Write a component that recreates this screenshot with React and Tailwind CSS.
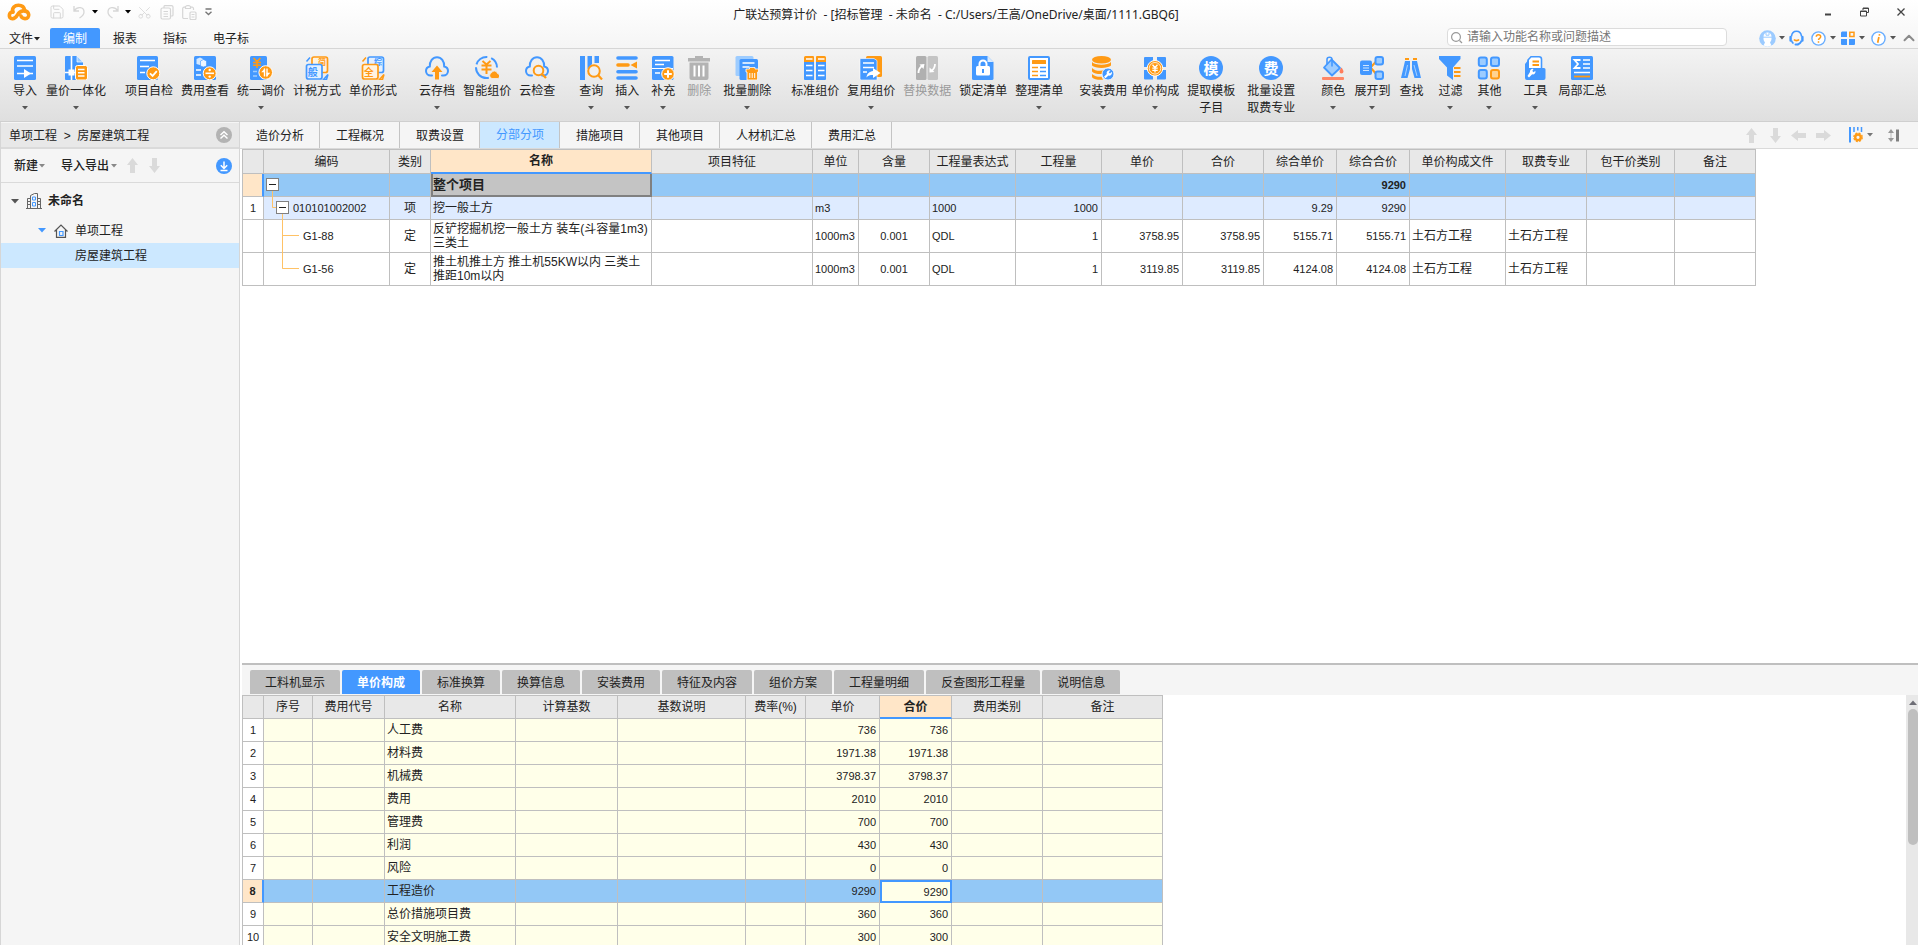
import React from 'react';
import { Save, Scissors, ChevronUp } from 'lucide-react';
import clsx from 'clsx';

const B = '#4398ff';
const O = '#ff9a14';
const L = '#9dccff';
const G = '#b3b3b3';

const Caret = ({ className = 'text-[#555]' }) => (
  <svg width="6" height="4" viewBox="0 0 6 4" className={clsx('shrink-0', className)}>
    <path d="M0 0h6L3 3.5z" fill="currentColor" />
  </svg>
);

const Icon = ({ children }) => (
  <svg width="24" height="24" viewBox="0 0 24 24" fill="none" className="shrink-0">
    {children}
  </svg>
);

const Glyph = ({ x, y, size, fill, children }) => (
  <text x={x} y={y} fontSize={size} fill={fill} fontWeight="700" textAnchor="middle" fontFamily='"Noto Sans CJK SC", sans-serif'>
    {children}
  </text>
);

const Cloud = () => (
  <path d="M7 19.5H5.6A4.6 4.6 0 0 1 1 15c0-2.300 1.600-4.200 3.800-4.600C4.600 5.500 7.600 1.200 12 1.200s7.400 4.300 7.200 9.200C21.400 10.800 23 12.700 23 15a4.600 4.600 0 0 1-4.600 4.500H17" stroke={B} strokeWidth="2" strokeLinecap="round" />
);

// --- Ribbon icons ---
const icons = {
  import: (
    <Icon>
      <rect x="1" width="22" height="24" rx="1.500" fill={B} />
      <path d="M4 4.500h16M4 10h16M4 17.500h16" stroke="#fff" strokeWidth="1.600" />
      <path d="M11 13l7 4.500-7 4.500z" fill="#fff" />
    </Icon>
  ),
  combine: (
    <Icon>
      <path d="M2 0h11l6 6v18H2a1 1 0 0 1-1-1V1a1 1 0 0 1 1-1z" fill={B} />
      <path d="M13 0l6 6h-6z" fill={L} stroke="#fff" strokeWidth=".7" />
      <path d="M7.500 0v24M1 16.500h12" stroke="#fff" strokeWidth="1.600" />
      <rect x="4.500" y="13.500" width="6" height="6" fill="#fff" />
      <rect x="11.500" y="9.500" width="12" height="14.500" rx="2" fill={O} stroke="#fff" />
      <path d="M14 13.500h6.500M14 16.800h6.500M14 20h6.500" stroke="#fff" strokeWidth="1.400" />
    </Icon>
  ),
  selfCheck: (
    <Icon>
      <rect width="21" height="24" rx="1.500" fill={B} />
      <path d="M3 4.500h15M3 10.500h9M3 16.500h5" stroke="#fff" strokeWidth="1.600" />
      <circle cx="16.300" cy="17.300" r="6.500" fill={O} stroke="#fff" />
      <path d="M13 17.300l2.600 2.600 4.200-4.800" stroke="#fff" strokeWidth="1.800" />
    </Icon>
  ),
  costView: (
    <Icon>
      <rect x="1" width="22" height="24" rx="1.500" fill={B} />
      <path d="M3.500 3l3.500-1.500 3 1.500v5l-3 1-3.500-1z" fill="#d5e9ff" />
      <path d="M7.500 5l3-1.500 3 1.500v5l-3 1-3-1z" fill="#eef6ff" stroke={B} strokeWidth=".6" />
      <path d="M3 14h5M3 19h5" stroke="#fff" strokeWidth="1.600" />
      <circle cx="16.700" cy="17.300" r="6.500" fill={O} stroke="#fff" />
      <path d="M12.500 17.300h8.500" stroke="#fff" strokeWidth="1.600" />
      <circle cx="16.700" cy="14" r="1.200" fill="#fff" />
      <circle cx="16.700" cy="20.600" r="1.200" fill="#fff" />
    </Icon>
  ),
  adjust: (
    <Icon>
      <rect x="1" width="17" height="24" rx="1.500" fill={B} />
      <path d="M4.500 2L8 5.500 11.500 2M8 6v6M4 6.500h8M4 9.200h8" stroke={O} strokeWidth="1.600" />
      <path d="M4 15.500h4M4 20h4" stroke={L} strokeWidth="1.500" />
      <circle cx="16.700" cy="16.500" r="6.800" fill={O} stroke="#fff" />
      <path d="M15.500 20.500v-8M18 12.500v8" stroke="#fff" strokeWidth="1.400" />
      <path d="M16 12.300v4h-3.800zM17.500 20.700v-4h3.800z" fill="#fff" />
    </Icon>
  ),
  taxMode: (
    <Icon>
      <rect x="7" y="1" width="15.500" height="15.500" rx="2" fill="#fff3e0" stroke={O} strokeWidth="1.700" />
      <Glyph x="17" y="8.500" size="8" fill={O}>简</Glyph>
      <rect x="1.500" y="8.500" width="15.500" height="14.500" rx="2" fill="#e3f0ff" stroke={B} strokeWidth="1.700" />
      <Glyph x="7.800" y="19.500" size="10" fill={B}>般</Glyph>
      <path d="M1.500 5.500l3.500-4M18.500 23.500h3l1.500-5z" stroke={B} strokeWidth="1.500" />
    </Icon>
  ),
  priceMode: (
    <Icon>
      <rect x="7" y="1" width="15.500" height="15.500" rx="2" fill="#e3f0ff" stroke={B} strokeWidth="1.700" />
      <Glyph x="17" y="8.500" size="8" fill={B}>综</Glyph>
      <rect x="1.500" y="8.500" width="15.500" height="14.500" rx="2" fill="#fff3e0" stroke={O} strokeWidth="1.700" />
      <Glyph x="7.800" y="19.500" size="10" fill={O}>全</Glyph>
      <path d="M1.500 5.500l3.500-4M18.500 23.500h3l1.500-5z" stroke={O} strokeWidth="1.500" />
    </Icon>
  ),
  cloudSave: (
    <Icon>
      <Cloud />
      <path d="M12 9.500l5.500 6.500h-3.500v7.500h-4V16H6.500z" fill={O} />
    </Icon>
  ),
  smartPrice: (
    <Icon>
      <circle cx="11.500" cy="11.500" r="10.500" stroke={B} strokeWidth="2" strokeDasharray="19 3 14 4 40" strokeDashoffset="-14" />
      <path d="M7.500 5l4 3.500 4-3.500M11.500 8v10M6.500 9.500h10M6.500 13.500h10" stroke={O} strokeWidth="2" />
      <path d="M17 22.500a3 3 0 0 1-.500-5.700 3.200 3.200 0 0 1 6 .7 2.600 2.600 0 0 1 .5 5z" fill={O} stroke="#eee" strokeWidth=".8" />
    </Icon>
  ),
  cloudCheck: (
    <Icon>
      <Cloud />
      <circle cx="13.500" cy="14.500" r="4.800" stroke={O} strokeWidth="2" fill="#f0f0f0" />
      <path d="M17 18l4 4" stroke={O} strokeWidth="2.300" />
    </Icon>
  ),
  query: (
    <Icon>
      <path d="M1 0h5v24H1zM8.500 0H13v8l-4.500 5zM15.500 0H20v7h-4.500z" fill={B} />
      <circle cx="15" cy="15" r="5.800" stroke={O} strokeWidth="2" fill="#f0f0f0" />
      <path d="M19 19l4 4.500" stroke={O} strokeWidth="2.200" />
    </Icon>
  ),
  insert: (
    <Icon>
      <path d="M3 2h18M3 15.700h18M3 22h18" stroke={B} strokeWidth="3.600" strokeLinecap="round" />
      <path d="M3 9h10" stroke={O} strokeWidth="3.600" strokeLinecap="round" />
      <path d="M22 5.500v7L15.500 9z" fill={O} />
    </Icon>
  ),
  supplement: (
    <Icon>
      <rect x="1" width="21.500" height="24" rx="1.500" fill={B} />
      <path d="M1 12.500h21" stroke="#fff" />
      <path d="M4 4.500h15M4 8.500h9M4 17h5" stroke="#fff" strokeWidth="1.500" />
      <circle cx="17" cy="18" r="6.300" fill={O} stroke="#fff" />
      <path d="M17 14.200v7.600M13.200 18h7.600" stroke="#fff" strokeWidth="2" />
    </Icon>
  ),
  trash: (
    <Icon>
      <path d="M8 0h8v2h7v3.500H1V2h7zM2.500 6.500h19V22a2 2 0 0 1-2 2h-15a2 2 0 0 1-2-2z" fill={G} />
      <path d="M7.500 9.500v11M12 9.500v11M16.500 9.500v11" stroke="#fff" strokeWidth="2" />
    </Icon>
  ),
  batchTrash: (
    <Icon>
      <rect x=".5" width="18" height="20" rx="1.500" fill={L} />
      <rect x="4.500" y="3" width="18.500" height="21" rx="1.500" fill={B} />
      <path d="M7.500 7h12M7.500 11h7" stroke="#fff" strokeWidth="1.400" />
      <path d="M14.500 11.500h5.500v1.500h3.500v3h-1V24h-10.500v-8h-1v-3h3.500z" fill={O} stroke="#fff" strokeWidth=".8" />
      <path d="M14.800 17v5M17.200 17v5M19.700 17v5" stroke="#fff" />
    </Icon>
  ),
  standard: (
    <Icon>
      <path d="M2.500 0H10a1 1 0 0 1 1 1v6H1V1.500A1.500 1.500 0 0 1 2.500 0zM14 0h7.500A1.500 1.500 0 0 1 23 1.500V7H13V1a1 1 0 0 1 1-1z" fill={O} />
      <path d="M1 6h10v18H2a1 1 0 0 1-1-1zM13 6h10v17a1 1 0 0 1-1 1h-9z" fill={B} />
      <path d="M3 3h6.500M15 3h6.500M3 9.500h6.500M15 9.500h6.500M3 14.500h6.500M15 14.500h6.500M3 19.500h6.500M15 19.500h6.500" stroke="#fff" strokeWidth="1.500" />
    </Icon>
  ),
  reuse: (
    <Icon>
      <rect x="7" width="16" height="21" rx="1.500" fill={O} />
      <path d="M2 2.500h13l3 2V24H2.500A1.500 1.500 0 0 1 1 22.500v-19a1 1 0 0 1 1-1z" fill={B} stroke="#fff" strokeWidth=".6" />
      <path d="M4 7h11M4 11.500h11M4 16h4" stroke="#fff" strokeWidth="1.500" />
      <path d="M14 12l7.500 5-7.500 5v-3c-3 0-5 .5-6.500 2.500C8 17.500 10.500 15.500 14 15z" fill="#fff" />
    </Icon>
  ),
  replace: (
    <Icon>
      <rect x="1" width="10.500" height="24" rx="1.500" fill="#b0b0b0" />
      <rect x="12.500" width="10.500" height="24" rx="1.500" fill="#c4c4c4" />
      <path d="M3.500 17c0-3 .5-5 3.500-7M20 8c0 3-1 5-3.500 7" stroke="#fff" strokeWidth="1.800" />
      <path d="M4.500 8.500l5-.500-1 5zM14.500 11.500l5 4.500-5 .5z" fill="#fff" />
    </Icon>
  ),
  lock: (
    <Icon>
      <path d="M2 0h14.500l6 6v16.500A1.500 1.500 0 0 1 21 24H2.500A1.500 1.500 0 0 1 1 22.500V1a1 1 0 0 1 1-1z" fill={B} />
      <path d="M16.500 0l6 6h-6z" fill="#d8eaff" />
      <path d="M8.500 11V8a3.500 3.500 0 0 1 7 0v3" stroke="#fff" strokeWidth="2" />
      <rect x="5" y="10" width="14" height="9.500" rx="1.500" fill="#fff" />
      <path d="M12 13v4" stroke={B} strokeWidth="2" />
    </Icon>
  ),
  arrange: (
    <Icon>
      <rect x="2" y="1" width="20" height="22" rx="1" fill="#fff" stroke={B} strokeWidth="2" />
      <rect x="5" y="4" width="14" height="4" rx=".5" fill={O} />
      <path d="M5 11.500h6M5 15.500h6M5 19.500h6" stroke={O} strokeWidth="1.600" />
      <path d="M13 11.500h6M13 15.500h6M13 19.500h6" stroke={B} strokeWidth="1.600" />
    </Icon>
  ),
  install: (
    <Icon>
      <ellipse cx="10.500" cy="3.800" rx="9.500" ry="3.800" fill={O} />
      <path d="M1 6c3 3.500 16 3.500 19 0v3.500c-3 3.300-16 3.300-19 0zM1 12c3 3.300 9 3.300 13 2l-3 4c-4 .3-8-.5-10-2.500zM1 18c2.500 2.500 6 3 9.500 2.800l1.500 3c-5 .3-9-.3-11-2.500z" fill={O} />
      <circle cx="17" cy="18" r="6" fill={B} stroke="#fff" strokeWidth=".8" />
      <path d="M19.500 14.500a2.800 2.800 0 0 0-3.700 3.500L13 20.700l1.500 1.500 2.900-2.700a2.800 2.800 0 0 0 3.400-3.700l-1.800 1.700-1.300-1.300z" fill="#fff" />
    </Icon>
  ),
  compose: (
    <Icon>
      <path d="M2 1h8v10H1V2a1 1 0 0 1 1-1zM14 1h8a1 1 0 0 1 1 1v9h-9zM1 14h9v9.500H2a1 1 0 0 1-1-1zM14 14h9v8.500a1 1 0 0 1-1 1h-8z" fill={B} />
      <circle cx="12" cy="12.300" r="7.800" fill={O} stroke="#fff" strokeWidth="1" />
      <circle cx="12" cy="12.300" r="5.800" stroke="#fff" strokeWidth=".8" />
      <path d="M9.500 8.800l2.500 2.700 2.500-2.700M12 11.500v5M9.300 12.200h5.400M9.300 14.400h5.400" stroke="#fff" strokeWidth="1.300" />
    </Icon>
  ),
  template: (
    <Icon>
      <circle cx="12" cy="12" r="12" fill={B} />
      <Glyph x="12" y="17.500" size="15" fill="#fff">模</Glyph>
    </Icon>
  ),
  fee: (
    <Icon>
      <circle cx="12" cy="12" r="12" fill={B} />
      <Glyph x="12" y="17.500" size="15" fill="#fff">费</Glyph>
    </Icon>
  ),
  color: (
    <Icon>
      <path d="M10.500 3.500L19 12l-8 7.500L3 11.500z" fill={L} stroke={B} strokeWidth="1.800" strokeLinejoin="round" />
      <path d="M6 8.500V3.500c0-3 5-3 5 0v7" stroke={B} strokeWidth="1.600" />
      <path d="M20.500 11.500c1.300 2 2 3 2 4a2 2 0 0 1-4 0c0-1 .7-2 2-4z" fill="#ff7d5c" />
      <rect x="1" y="21" width="22" height="3" rx="1" fill="#ff8766" />
    </Icon>
  ),
  expand: (
    <Icon>
      <path d="M11 11l6-6.500M11 12l6 7" stroke={O} strokeWidth="2" />
      <rect y="4.500" width="12" height="14.500" rx="2" fill={B} />
      <path d="M3 9.500h6M3 12h6M3 14.500h6" stroke="#cfe5ff" strokeWidth="1.200" />
      <rect x="15.500" y="1" width="7.500" height="7.500" rx="2" fill={L} stroke={B} strokeWidth="2" />
      <rect x="15.500" y="15.500" width="7.500" height="7.500" rx="2" fill={L} stroke={B} strokeWidth="2" />
    </Icon>
  ),
  find: (
    <Icon>
      <path d="M6 5h5v8l-2.500 9H2zM13 5h5l4 17h-6.500L13 13z" fill={B} />
      <path d="M8.500 9L6 20M15 9l3 11" stroke="#a8d2ff" />
      <path d="M6 3h4M14 3h4" stroke={O} strokeWidth="2.200" />
    </Icon>
  ),
  filter: (
    <Icon>
      <path d="M1 0h21.500v3L15 11.500V24l-6-4.500v-8L1 3z" fill={B} />
      <path d="M16 12h6.500M16 16h6.500M16 20h6.500" stroke={O} strokeWidth="2" />
    </Icon>
  ),
  other: (
    <Icon>
      <rect x="1.800" y="1.500" width="8" height="8.500" rx="2" fill={L} stroke={B} strokeWidth="2" />
      <rect x="14" y="1.500" width="8" height="8.500" rx="2" fill={L} stroke={B} strokeWidth="2" />
      <rect x="1.800" y="14" width="8" height="8.500" rx="2" fill={L} stroke={B} strokeWidth="2" />
      <rect x="14" y="14" width="8" height="8.500" rx="2" fill="#ffd391" stroke={O} strokeWidth="2" />
    </Icon>
  ),
  tool: (
    <Icon>
      <path d="M8 .8h8a2.500 2.500 0 0 1 2.500 2.500V13H5V4z" fill="#fff" stroke={B} strokeWidth="1.600" />
      <path d="M9.500 5.500h6.500M9.500 9h6.500" stroke={O} strokeWidth="1.800" />
      <path d="M2 8l4-5v9h15a1.500 1.500 0 0 1 1.500 1.500V22a2 2 0 0 1-2 2H4a2 2 0 0 1-2-2z" fill={B} />
      <path d="M10.500 13a2.600 2.600 0 0 0-3.500 3L4.500 20l1.500 1.500 3.200-3.200a2.600 2.600 0 0 0 3.100-3.500l-1.600 1.500-1.400-1.400z" fill="#fff" />
    </Icon>
  ),
  summary: (
    <Icon>
      <rect x="1" width="22" height="24" rx="1.500" fill={B} />
      <path d="M10.500 4H4.500l3.500 4-3.500 4h6" stroke="#fff" strokeWidth="1.800" />
      <path d="M13 4h7M13 8h7M13 12h7M4 16.500h16" stroke="#fff" strokeWidth="1.600" />
      <path d="M4 20.500h16" stroke={O} strokeWidth="1.800" />
    </Icon>
  ),
};

const ribbon = [
  {
    className: 'gap-[9px]',
    items: [
      { icon: 'import', label: '导入', menu: true },
      { icon: 'combine', label: '量价一体化', menu: true },
    ],
  },
  {
    className: 'ml-[19px] gap-2',
    items: [
      { icon: 'selfCheck', label: '项目自检' },
      { icon: 'costView', label: '费用查看' },
      { icon: 'adjust', label: '统一调价', menu: true },
      { icon: 'taxMode', label: '计税方式' },
      { icon: 'priceMode', label: '单价形式' },
    ],
  },
  {
    className: 'ml-[22px] gap-2',
    items: [
      { icon: 'cloudSave', label: '云存档', menu: true },
      { icon: 'smartPrice', label: '智能组价' },
      { icon: 'cloudCheck', label: '云检查' },
    ],
  },
  {
    className: 'ml-6 gap-3',
    items: [
      { icon: 'query', label: '查询', menu: true },
      { icon: 'insert', label: '插入', menu: true },
      { icon: 'supplement', label: '补充', menu: true },
      { icon: 'trash', label: '删除', disabled: true },
      { icon: 'batchTrash', label: '批量删除', menu: true },
    ],
  },
  {
    className: 'ml-5 gap-2',
    items: [
      { icon: 'standard', label: '标准组价' },
      { icon: 'reuse', label: '复用组价', menu: true },
      { icon: 'replace', label: '替换数据', disabled: true },
      { icon: 'lock', label: '锁定清单' },
      { icon: 'arrange', label: '整理清单', menu: true },
    ],
  },
  {
    className: 'ml-4 gap-1',
    items: [
      { icon: 'install', label: '安装费用', menu: true },
      { icon: 'compose', label: '单价构成', menu: true },
      { icon: 'template', label: '提取模板', second: '子目' },
      { icon: 'fee', label: '批量设置', second: '取费专业' },
    ],
  },
  {
    className: 'ml-4 gap-[3px]',
    items: [
      { icon: 'color', label: '颜色', menu: true, wide: true },
      { icon: 'expand', label: '展开到', menu: true, wide: true },
      { icon: 'find', label: '查找', wide: true },
      { icon: 'filter', label: '过滤', menu: true, wide: true },
      { icon: 'other', label: '其他', menu: true, wide: true },
    ],
  },
  {
    className: 'ml-4 gap-[11px]',
    items: [
      { icon: 'tool', label: '工具', menu: true },
      { icon: 'summary', label: '局部汇总' },
    ],
  },
];

const RibbonButton = ({ icon, label, second, menu, disabled, wide }) => (
  <button
    disabled={disabled}
    className={clsx('flex flex-col items-center whitespace-nowrap', second && 'px-1', wide && 'min-w-9', disabled ? 'text-[#9a9a9a]' : 'text-[#222]')}
  >
    {icons[icon]}
    <span className="mt-[3px] leading-[17px]">{label}</span>
    {second && <span className="leading-[17px]">{second}</span>}
    {menu && <Caret className="mt-[6px] text-[#555]" />}
  </button>
);

const Logo = () => (
  <svg width="24" height="18" viewBox="0 0 24 18" fill="none" stroke={O} strokeWidth="3.600" strokeLinecap="round">
    <path d="M5.800 9.200C4.500 4.500 8 2.200 11.500 2.200c3.500 0 5.700 2.200 6.200 5" />
    <path d="M6 8.800c-4.500.2-5 6.700-.7 6.900C11 16 9.500 8.300 16 7.900c7-.3 7.500 7.700 2 7.700-2 0-3.500-1.200-4-2.600" />
  </svg>
);

const TitleBar = () => (
  <div className="flex h-7 items-start">
    <div className="flex flex-1 items-center pl-[7px] pt-[3px]">
      <Logo />
      <div className="ml-[18px] flex items-center text-[#d6d6d6]">
        <button aria-label="保存"><Save size={16} strokeWidth={1.5} /></button>
        <button aria-label="撤销" className="ml-2 flex items-center gap-1.5">
          <svg width="13" height="14" viewBox="0 0 13 14" fill="none" stroke="currentColor" strokeWidth="1.300">
            <path d="M1 1v5h5M1.500 5.500C4 1.500 11 1.500 11 7c0 2.500-2 4.500-4.500 6" />
          </svg>
          <Caret className="text-black" />
        </button>
        <button aria-label="恢复" className="ml-2 flex items-center gap-1.5">
          <svg width="13" height="14" viewBox="0 0 13 14" fill="none" stroke="currentColor" strokeWidth="1.300">
            <path d="M12 1v5H7M11.500 5.500C9 1.500 2 1.500 2 7c0 2.500 2 4.500 4.500 6" />
          </svg>
          <Caret className="text-black" />
        </button>
        <button aria-label="剪切" className="ml-1.5"><Scissors size={15} strokeWidth={1.3} className="-rotate-90" /></button>
        <button aria-label="复制" className="ml-2">
          <svg width="14" height="15" viewBox="0 0 14 15" fill="none" stroke="currentColor" strokeWidth="1.200">
            <path d="M4 3V1.500A1 1 0 0 1 5 .6h6.500a1.500 1.500 0 0 1 1.500 1.500V10a1 1 0 0 1-1 1h-1" />
            <rect x="1" y="3" width="9.500" height="11" rx="1.500" />
            <path d="M3.500 6.500h4.500M3.500 9h4.500M3.500 11.500h4.500" />
          </svg>
        </button>
        <button aria-label="粘贴" className="ml-2">
          <svg width="15" height="15" viewBox="0 0 15 15" fill="none" stroke="currentColor" strokeWidth="1.200">
            <path d="M6 13.500H2A1.300 1.300 0 0 1 .7 12V3.500A1.300 1.300 0 0 1 2 2.200h1.500M8.500 2.200h1.700a1.300 1.300 0 0 1 1.300 1.300V5" />
            <path d="M3.500 3.500v-2L5 .6h2l1.500.9v2z" />
            <rect x="8" y="7" width="6" height="7.500" rx="1" />
            <path d="M9.500 9.500h3M9.500 12h3" />
          </svg>
        </button>
        <button aria-label="自定义" className="ml-2 text-[#777]">
          <svg width="7" height="8" viewBox="0 0 7 8" fill="none" stroke="currentColor" strokeWidth="1.400">
            <path d="M.5 1h6M.5 3.800l3 2.700 3-2.700" />
          </svg>
        </button>
      </div>
    </div>
    <h1 className="pt-1.5 font-normal leading-[17px] text-[#222]">广联达预算计价 &nbsp;- [招标管理 &nbsp;- 未命名 &nbsp;- C:/Users/王高/OneDrive/桌面/1111.GBQ6]</h1>
    <div className="flex flex-1 items-center justify-end gap-7 pr-[13px] pt-[7px] text-[#444]">
      <button aria-label="最小化">
        <svg width="8" height="10" viewBox="0 0 8 10"><path d="M1 7.500h6" stroke="currentColor" strokeWidth="2" /></svg>
      </button>
      <button aria-label="还原">
        <svg width="9" height="10" viewBox="0 0 9 10" fill="none" stroke="currentColor">
          <path d="M3 3V1h5.500v4.500H6.500M3 1.500h5.500" />
          <path d="M.5 4h6v5h-6zM.5 4.500h6" />
        </svg>
      </button>
      <button aria-label="关闭">
        <svg width="8" height="8" viewBox="0 0 8 8"><path d="M.5.5l7 7M7.500.5l-7 7" stroke="currentColor" strokeWidth="1.300" /></svg>
      </button>
    </div>
  </div>
);

const MenuBar = () => (
  <nav className="flex h-5 items-stretch">
    <button className="flex w-[50px] items-center pl-[9px] pt-0.5">文件<Caret className="ml-px" /></button>
    <button className="w-[50px] rounded-t-[2px] bg-[#4398ff] pt-0.5 text-white">编制</button>
    <button className="w-[50px] pt-0.5">报表</button>
    <button className="w-[50px] pt-0.5">指标</button>
    <button className="px-[13px] pt-0.5">电子标</button>
    <label className="ml-auto flex h-[18px] w-[280px] items-center gap-1 rounded-sm border border-[#dcdcdc] bg-white px-[3px]">
      <svg width="12" height="13" viewBox="0 0 12 13" fill="none" stroke="#999" strokeWidth="1.200">
        <circle cx="5" cy="6" r="4.400" />
        <path d="M8.500 9.500L11 12" />
      </svg>
      <input aria-label="搜索" placeholder="请输入功能名称或问题描述" className="min-w-0 flex-1 bg-transparent leading-4 outline-none placeholder:text-[#777]" />
    </label>
    <div className="ml-8 flex items-center text-black">
      <button aria-label="账户" className="flex items-center gap-[3px]">
        <svg width="17" height="17" viewBox="0 0 17 17">
          <circle cx="8.500" cy="8.500" r="8.300" fill="#9ccbff" />
          <path d="M4.500 6.500c0-2.500 2-4 4-4s4 1.500 4 4V9c0 1.500-1 2.500-1.500 3.500l1.500 3-4 1.300-4-1.300 1.500-3C5.500 11.500 4.500 10.500 4.500 9z" fill="#fff" />
          <path d="M3.500 7.200h10M7 3v2.200h3V3" stroke="#9ccbff" fill="none" />
        </svg>
        <Caret />
      </button>
      <button aria-label="客服" className="ml-1">
        <svg width="15" height="16" viewBox="0 0 15 16" fill="none">
          <path d="M2.500 6.500C2.800 3 4.700 1.200 7.500 1.200s4.700 1.800 5 5.300M12.500 10.500c-.500 2.200-2 3.500-4 4M2.500 10.500c.4 1.500 1 2.500 2 3" stroke={B} strokeWidth="1.500" />
          <path d="M1.600 7v3.500M13.400 7v3.500" stroke={B} strokeWidth="2.400" strokeLinecap="round" />
          <path d="M6.500 14.500h2.500" stroke={B} strokeWidth="2" strokeLinecap="round" />
          <path d="M5 9.500c1 1.500 4 1.500 5 0" stroke={O} strokeWidth="1.600" />
        </svg>
      </button>
      <button aria-label="帮助" className="ml-[7px] flex items-center gap-1">
        <svg width="15" height="15" viewBox="0 0 15 15" fill="none">
          <circle cx="7.500" cy="7.500" r="6.600" stroke="#6aaeff" strokeWidth="1.400" fill="#fff" />
          <path d="M5.300 5.800c0-2.800 4.400-2.800 4.400 0 0 1.500-2.200 1.500-2.200 3.200M7.500 10.200v1.600" stroke={O} strokeWidth="1.500" />
        </svg>
        <Caret />
      </button>
      <button aria-label="应用" className="ml-[5px] flex items-center gap-1">
        <svg width="14" height="14" viewBox="0 0 14 14" fill="none">
          <path d="M1 .5h5v5.500H0V1.500zM0 8h6v6H1a1 1 0 0 1-1-1zM8 8h6v5a1 1 0 0 1-1 1H8z" fill={B} />
          <rect x="8.800" y="1.300" width="4.200" height="4.200" stroke={O} strokeWidth="1.500" />
        </svg>
        <Caret />
      </button>
      <button aria-label="关于" className="ml-1.5 flex items-center gap-1">
        <svg width="15" height="15" viewBox="0 0 15 15" fill="none">
          <circle cx="7.500" cy="7.500" r="6.600" stroke="#6aaeff" strokeWidth="1.400" fill="#fff" />
          <path d="M8.600 3.200l-.3 1.500M7.900 6l-1.200 5.700" stroke={O} strokeWidth="1.700" />
        </svg>
        <Caret />
      </button>
      <button aria-label="收起" className="ml-1 text-[#8a8a8a]"><ChevronUp size={18} strokeWidth={2.6} /></button>
    </div>
  </nav>
);

const ArrowUp = ({ className }) => (
  <svg width="15" height="15" viewBox="0 0 15 15" className={className}>
    <path d="M7.500 0L13 7h-3v8H5V7H2z" fill="#dadada" />
  </svg>
);

const TreeCaret = ({ className }) => (
  <svg width="8" height="5" viewBox="0 0 8 5" className={className}><path d="M0 0h8L4 4.500z" fill="currentColor" /></svg>
);

const Sidebar = () => (
  <aside className="flex w-60 shrink-0 flex-col border-x border-[#d6d6d6] bg-[#f5f5f5] pt-px">
    <div className="flex h-[26px] items-center justify-between border-b-2 border-[#dadada] bg-[#e8e8e8] pl-2 pr-[7px]">
      <span className="pt-px">单项工程 &nbsp;&gt; &nbsp;房屋建筑工程</span>
      <button aria-label="折叠">
        <svg width="16" height="16" viewBox="0 0 16 16" fill="none">
          <circle cx="8" cy="8" r="8" fill="#b3b3b3" />
          <path d="M4.500 8L8 4.800 11.500 8M4.500 11.500L8 8.300l3.500 3.200" stroke="#fff" strokeWidth="1.500" />
        </svg>
      </button>
    </div>
    <div className="flex h-[34px] items-center border-b border-[#dadada] pl-[13px] pr-[7px]">
      <button className="flex items-center font-medium">新建<Caret className="ml-px text-[#888]" /></button>
      <button className="ml-4 flex items-center font-medium">导入导出<Caret className="ml-0.5 text-[#888]" /></button>
      <button aria-label="上移" className="ml-2"><ArrowUp /></button>
      <button aria-label="下移" className="ml-[7px]"><ArrowUp className="rotate-180" /></button>
      <button aria-label="下载" className="ml-auto">
        <svg width="16" height="16" viewBox="0 0 16 16" fill="none" stroke="#fff" strokeWidth="1.500">
          <circle cx="8" cy="8" r="8" fill={B} stroke="none" />
          <path d="M8 3.500v7M4.800 7.300L8 10.500l3.200-3.200M4.500 12.500h7" />
        </svg>
      </button>
    </div>
    <ul className="pt-px">
      <li className="flex h-[34px] items-center pl-2.5 font-bold">
        <TreeCaret className="text-[#555]" />
        <svg width="16" height="16" viewBox="0 0 16 16" fill="none" stroke="#666" className="ml-[7px] mr-1.5">
          <path d="M0 15.500h16M1.500 15V5.500h3M4.500 15V2.500l4-2h3V15M11.500 5.500h3V15M2 8.500h2M2 11.500h2M12 8.500h2M12 11.500h2" />
          <path d="M6.500 4h3v3h-3zM6.500 9.500h3v3.500h-3z" stroke={B} />
        </svg>
        未命名
      </li>
      <li className="flex h-[25px] items-center pl-[37px]">
        <TreeCaret className="text-[#4398ff]" />
        <svg width="14" height="14" viewBox="0 0 14 14" fill="none" stroke="#555" className="ml-2 mr-[7px]" strokeWidth="1.200">
          <path d="M.5 7.500L7 1l6.500 6.500M2.500 6v7.400h9V6" />
          <path d="M5.500 7.500h3.500v4H5.500z" stroke={B} />
        </svg>
        单项工程
      </li>
      <li className="flex h-[25px] items-center bg-[#cce8ff] pl-[74px] pt-px">房屋建筑工程</li>
    </ul>
  </aside>
);

const pageTabs = ['造价分析', '工程概况', '取费设置', '分部分项', '措施项目', '其他项目', '人材机汇总', '费用汇总'];

const PageTabs = () => (
  <div className="flex h-[27px] shrink-0 items-stretch border-b border-[#dadada] bg-[#f5f5f5]">
    {pageTabs.map((t) => (
      <button key={t} className={clsx('border-r border-[#c4c4c4] px-[15px] pl-4', t === '分部分项' ? 'bg-[#cce8ff] text-[#4398ff]' : 'pt-0.5 text-[#222]')}>
        {t}
      </button>
    ))}
    <div className="ml-auto flex items-center pr-[18px]">
      <button aria-label="上移"><ArrowUp /></button>
      <button aria-label="下移" className="ml-[9px]"><ArrowUp className="rotate-180" /></button>
      <button aria-label="升级" className="ml-2"><ArrowUp className="-rotate-90" /></button>
      <button aria-label="降级" className="ml-2.5"><ArrowUp className="rotate-90" /></button>
      <button aria-label="列设置" className="ml-[18px] flex items-center gap-1">
        <svg width="14" height="16" viewBox="0 0 14 16" fill="none">
          <path d="M1 0v15.500" stroke={B} strokeWidth="2" />
          <path d="M5 0v5M8.800 0v3.500M12.500 0v5" stroke={B} strokeWidth="1.500" />
          <circle cx="9" cy="10.300" r="2.800" stroke={O} strokeWidth="2.400" />
          <circle cx="9" cy="10.300" r="4.300" stroke={O} strokeWidth="1.200" strokeDasharray="2 1.400" />
        </svg>
        <Caret className="text-[#777]" />
      </button>
      <button aria-label="行高" className="ml-[15px]">
        <svg width="12" height="13" viewBox="0 0 12 13" fill="none">
          <path d="M9.500.5v12" stroke="#808080" strokeWidth="3" />
          <path d="M3 0l3 4H0zM3 13l3-4H0z" fill="#999" />
          <path d="M3 4v5" stroke="#bbb" strokeWidth="1" />
        </svg>
      </button>
    </div>
  </div>
);

const topCols = [
  { w: 'w-[22px]', label: '' },
  { w: 'w-[126px]', label: '编码' },
  { w: 'w-[41px]', label: '类别', align: 'text-center' },
  { w: 'w-[221px]', label: '名称', align: 'pl-0.5' },
  { w: 'w-[161px]', label: '项目特征' },
  { w: 'w-[46px]', label: '单位', align: 'pl-0.5 text-[11px]' },
  { w: 'w-[71px]', label: '含量', align: 'text-center text-[11px]' },
  { w: 'w-[86px]', label: '工程量表达式', align: 'pl-0.5 text-[11px]' },
  { w: 'w-[86px]', label: '工程量', align: 'text-right pr-[3px] text-[11px]' },
  { w: 'w-[81px]', label: '单价', align: 'text-right pr-[3px] text-[11px]' },
  { w: 'w-[81px]', label: '合价', align: 'text-right pr-[3px] text-[11px]' },
  { w: 'w-[73px]', label: '综合单价', align: 'text-right pr-[3px] text-[11px]' },
  { w: 'w-[73px]', label: '综合合价', align: 'text-right pr-[3px] text-[11px]' },
  { w: 'w-[96px]', label: '单价构成文件', align: 'pl-0.5' },
  { w: 'w-[81px]', label: '取费专业', align: 'pl-0.5' },
  { w: 'w-[88px]', label: '包干价类别' },
  { w: 'w-[81px]', label: '备注' },
];

const ExpandBox = ({ x }) => (
  <>
    <rect x={x + 0.5} y="4.500" width="12" height="12" fill="#fff" stroke="#808080" />
    <path d={`M${x + 3} 10.500h7`} stroke="#222" />
  </>
);

// Tree guides run past the cell edge so they join up over the row borders
const codeCells = [
  <svg width="22" height="22" className="block overflow-visible" fill="none">
    <path d="M8.500 17v16.500h4" stroke="#ffc266" />
    <ExpandBox x={2} />
  </svg>,
  <>
    <svg width="29" height="22" className="block overflow-visible" fill="none">
      <path d="M18.500 17v21.500" stroke="#ffc266" />
      <ExpandBox x={12} />
    </svg>
    <span>010101002002</span>
  </>,
  <>
    <svg width="39" height="32" className="block overflow-visible" fill="none">
      <path d="M18.500 0v48.500M19 15.500h16" stroke="#ffc266" />
    </svg>
    <span>G1-88</span>
  </>,
  <>
    <svg width="39" height="32" className="block overflow-visible" fill="none">
      <path d="M18.500 0v15.500h16.500" stroke="#ffc266" />
    </svg>
    <span>G1-56</span>
  </>,
];

const topRows = [
  ['', '', '', '整个项目', '', '', '', '', '', '', '', '', '9290', '', '', '', ''],
  ['1', '', '项', '挖一般土方', '', 'm3', '', '1000', '1000', '', '', '9.29', '9290', '', '', '', ''],
  ['', '', '定', <>反铲挖掘机挖一般土方 装车(斗容量1m3)<br />三类土</>, '', '1000m3', '0.001', 'QDL', '1', '3758.95', '3758.95', '5155.71', '5155.71', '土石方工程', '土石方工程', '', ''],
  ['', '', '定', <>推土机推土方 推土机55KW以内 三类土<br />推距10m以内</>, '', '1000m3', '0.001', 'QDL', '1', '3119.85', '3119.85', '4124.08', '4124.08', '土石方工程', '土石方工程', '', ''],
];

const BillTable = () => (
  <table className="ml-0.5 table-fixed border-separate border-spacing-0 text-[#222]">
    <colgroup>{topCols.map((c, i) => <col key={i} className={c.w} />)}</colgroup>
    <thead>
      <tr className="h-[25px]">
        {topCols.map((c, i) => (
          <th
            key={i}
            className={clsx(
              'whitespace-nowrap border-r border-t border-[#bfbfbf] p-0 text-center',
              i === 0 && 'border-l',
              i === 3 ? 'border-b-2 border-b-[#4398ff] bg-[#ffe6c8] font-bold' : 'border-b bg-[#e8e8e8] font-normal',
            )}
          >
            {c.label}
          </th>
        ))}
      </tr>
    </thead>
    <tbody>
      {topRows.map((row, r) => (
        <tr key={r} className={clsx(r < 2 ? 'h-[23px]' : 'h-[33px]', r === 0 && 'bg-[#93c8f6] font-bold', r === 1 && 'bg-[#deebff]')}>
          {row.map((cell, c) => {
            if (c === 0) {
              return (
                <td key={c} className={clsx('border-b border-l border-[#bfbfbf] p-0 text-center text-[11px]', r === 0 ? 'border-r-2 border-r-[#4398ff] bg-[#ffe6c8]' : 'border-r bg-white')}>
                  {cell}
                </td>
              );
            }
            if (c === 1) {
              return (
                <td key={c} className="border-b border-r border-[#bfbfbf] p-0 text-[11px]">
                  <div className="flex items-center">{codeCells[r]}</div>
                </td>
              );
            }
            if (r === 0 && c === 3) {
              return (
                <td key={c} className="border-2 border-t-0 border-[#808080] bg-[#c4c4c4] p-0 text-[13px] leading-4">{cell}</td>
              );
            }
            return (
              <td key={c} className={clsx('whitespace-nowrap border-b border-r border-[#bfbfbf] p-0 leading-[14px]', topCols[c].align)}>
                {cell}
              </td>
            );
          })}
        </tr>
      ))}
    </tbody>
  </table>
);

const detailTabs = ['工料机显示', '单价构成', '标准换算', '换算信息', '安装费用', '特征及内容', '组价方案', '工程量明细', '反查图形工程量', '说明信息'];

const detailCols = [
  { w: 'w-[22px]', label: '' },
  { w: 'w-[49px]', label: '序号' },
  { w: 'w-[72px]', label: '费用代号' },
  { w: 'w-[131px]', label: '名称' },
  { w: 'w-[102px]', label: '计算基数' },
  { w: 'w-[128px]', label: '基数说明' },
  { w: 'w-[60px]', label: '费率(%)' },
  { w: 'w-[74px]', label: '单价' },
  { w: 'w-[72px]', label: '合价' },
  { w: 'w-[91px]', label: '费用类别' },
  { w: 'w-[120px]', label: '备注' },
];

const detailRows = [
  ['人工费', '736'],
  ['材料费', '1971.38'],
  ['机械费', '3798.37'],
  ['费用', '2010'],
  ['管理费', '700'],
  ['利润', '430'],
  ['风险', '0'],
  ['工程造价', '9290'],
  ['总价措施项目费', '360'],
  ['安全文明施工费', '300'],
];

const DetailTable = () => (
  <table className="table-fixed border-separate border-spacing-0 self-start text-[#222]">
    <colgroup>{detailCols.map((c, i) => <col key={i} className={c.w} />)}</colgroup>
    <thead>
      <tr className="h-6">
        {detailCols.map((c, i) => (
          <th
            key={i}
            className={clsx(
              'whitespace-nowrap border-r border-t border-[#bfbfbf] p-0 text-center leading-5',
              i === 0 && 'border-l',
              i === 8 ? 'border-b-2 border-b-[#4398ff] bg-[#ffe6c8] font-bold' : 'border-b bg-[#e8e8e8] font-normal',
            )}
          >
            {c.label}
          </th>
        ))}
      </tr>
    </thead>
    <tbody>
      {detailRows.map(([name, price], r) => {
        const active = r === 7;
        const values = { 3: name, 7: price, 8: price };
        return (
          <tr key={name} className={clsx('h-[23px]', active ? 'bg-[#93c8f6]' : 'bg-[#ffffe9]')}>
            <td className={clsx('border-b border-l border-[#bfbfbf] p-0 text-center text-[11px] leading-4', active ? 'border-r-2 border-r-[#4398ff] bg-[#ffe6c8] font-bold' : 'border-r bg-white')}>
              {r + 1}
            </td>
            {detailCols.slice(1).map((col, i) => {
              const c = i + 1;
              return (
                <td
                  key={c}
                  className={clsx(
                    'whitespace-nowrap p-0 leading-4',
                    c === 3 && 'pl-0.5',
                    c >= 7 && 'text-right text-[11px]',
                    active && c === 8 ? 'border-2 border-[#4398ff] bg-[#ffffe9] pr-0.5' : 'border-b border-r border-[#bfbfbf] pr-[3px]',
                  )}
                >
                  {values[c]}
                </td>
              );
            })}
          </tr>
        );
      })}
    </tbody>
  </table>
);

const DetailPanel = () => (
  <section className="ml-0.5 flex h-[282px] shrink-0 flex-col border-t-2 border-[#bfbfbf] bg-[#f5f5f5]">
    <div className="flex gap-0.5 px-2 pb-px pt-[5px]">
      {detailTabs.map((t) => (
        <button
          key={t}
          className={clsx('h-6 rounded-t-[2px] px-[15px] pt-px', t === '单价构成' ? 'bg-[#4398ff] font-bold text-white' : 'bg-[#bfbfbf] text-[#222]')}
        >
          {t}
        </button>
      ))}
    </div>
    <div className="flex min-h-0 flex-1 overflow-hidden bg-white">
      <DetailTable />
      <div className="ml-auto flex w-3 flex-col items-end bg-[#e8e8e8] pt-[5px]">
        <TreeCaret className="mr-px rotate-180 text-[#6e6e76]" />
        <div className="mt-1 h-[136px] w-2.5 rounded-full bg-[#bfbfbf]" />
      </div>
    </div>
  </section>
);

export default function App() {
  return (
    <div className="flex h-screen flex-col overflow-hidden bg-white font-['Liberation_Sans','Noto_Sans_CJK_SC',sans-serif] text-xs text-[#222]">
      <header className="shrink-0 border-b border-[#d6d6d6] bg-linear-to-b from-white to-[#f5f5f5] font-['Noto_Sans','Noto_Sans_CJK_SC',sans-serif]">
        <TitleBar />
        <MenuBar />
      </header>
      <div className="flex h-[73px] shrink-0 items-start border-b border-[#cfcfcf] bg-linear-to-b from-[#f3f3f3] to-[#dfdfdf] pl-[13px] pt-[7px]">
        {ribbon.map((group, i) => (
          <div key={i} className={clsx('flex items-start', group.className)}>
            {group.items.map((item) => <RibbonButton key={item.label} {...item} />)}
          </div>
        ))}
      </div>
      <div className="flex min-h-0 flex-1">
        <Sidebar />
        <main className="flex min-w-0 flex-1 flex-col">
          <PageTabs />
          <div className="min-h-0 flex-1 overflow-hidden">
            <BillTable />
          </div>
          <DetailPanel />
        </main>
      </div>
    </div>
  );
}
